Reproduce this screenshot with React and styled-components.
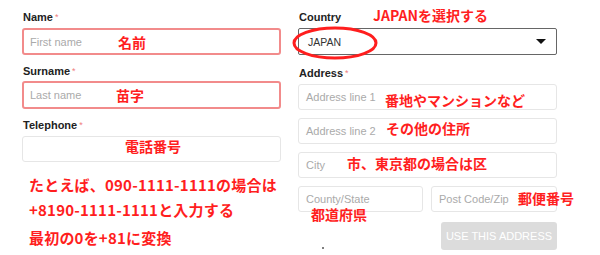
import React from "react";
import styled, { createGlobalStyle } from "styled-components";

const GlobalStyle = createGlobalStyle`
  body {
    margin: 0;
    background: #fff;
    font-family: "Liberation Sans", Arial, sans-serif;
  }
`;

const Page = styled.div`
  position: relative;
  width: 600px;
  height: 255px;
  overflow: hidden;
  display: grid;
  grid-template-columns: 259px 259px;
  column-gap: 17px;
  padding: 10px 0 0 22px;
  box-sizing: border-box;
`;

const Column = styled.div`
  display: flex;
  flex-direction: column;
`;

const Field = styled.div`
  display: flex;
  flex-direction: column;
  gap: ${(p) => p.$gap ?? 4}px;
  margin-bottom: ${(p) => p.$mb ?? 9}px;
`;

const Label = styled.label`
  font-size: 11px;
  line-height: 14px;
  font-weight: bold;
  color: #222;
  padding-left: 1px;
`;

const Star = styled.span`
  color: #f08080;
  font-weight: normal;
  font-size: 9px;
  margin-left: 2px;
  vertical-align: top;
`;

const Input = styled.div`
  height: ${(p) => p.$h || 27}px;
  box-sizing: border-box;
  border: ${(p) => (p.$error ? "2px solid #f28b8b" : "1px solid #e6e6e6")};
  border-radius: 3px;
  padding-left: ${(p) => (p.$error ? 6 : 7)}px;
  display: flex;
  align-items: center;
  font-size: 11px;
  color: #aaa;
  width: ${(p) => p.$w || "100%"};
`;

const Select = styled.div`
  height: 27px;
  box-sizing: border-box;
  border: 1px solid #666;
  border-radius: 2px;
  padding: 0 10px 0 9px;
  display: flex;
  align-items: center;
  justify-content: space-between;
  font-size: 10.5px;
  color: #333;
`;

const Arrow = styled.span`
  width: 0;
  height: 0;
  border-left: 5px solid transparent;
  border-right: 5px solid transparent;
  border-top: 5px solid #111;
`;

const Stack = styled.div`
  display: flex;
  flex-direction: column;
  gap: 8px;
`;

const Row = styled.div`
  display: flex;
  gap: 8px;
`;

const ButtonRow = styled.div`
  display: flex;
  justify-content: flex-end;
  margin-top: 10px;
`;

const Button = styled.button`
  width: 116px;
  height: 28px;
  border: none;
  border-radius: 3px;
  background: #dcdcdc;
  color: #fff;
  font-family: "Liberation Sans", Arial, sans-serif;
  font-size: 11px;
  padding: 0;
`;

const Notes = styled.div`
  display: flex;
  flex-direction: column;
  gap: 10px;
  margin-top: 6px;
  padding-left: 7px;
`;

const Note = styled.div`
  font-family: "Noto Sans CJK JP", "Noto Sans", sans-serif;
  font-weight: 700;
  font-size: 15px;
  line-height: 15px;
  letter-spacing: 0.2px;
  color: #ff1e1e;
  white-space: nowrap;
  margin-top: ${(p) => p.$extra || 0}px;
`;

const Tag = styled.span`
  position: absolute;
  left: ${(p) => p.$x}px;
  top: ${(p) => p.$y - 7}px;
  font-family: "Noto Sans CJK JP", "Noto Sans", sans-serif;
  font-weight: 700;
  font-size: 14px;
  line-height: 14px;
  color: #ff1e1e;
  white-space: nowrap;
`;

const Ring = styled.svg`
  position: absolute;
  left: 290px;
  top: 24px;
`;

const Dot = styled.span`
  position: absolute;
  left: 322px;
  top: 247px;
  width: 2px;
  height: 2px;
  border-radius: 1px;
  background: #555;
`;

const tags = [
  { t: "JAPANを選択する", x: 373, y: 15 },
  { t: "名前", x: 118, y: 42 },
  { t: "苗字", x: 116, y: 95 },
  { t: "電話番号", x: 125, y: 146 },
  { t: "番地やマンションなど", x: 385, y: 100 },
  { t: "その他の住所", x: 386, y: 128 },
  { t: "市、東京都の場合は区", x: 347, y: 163 },
  { t: "郵便番号", x: 518, y: 198 },
  { t: "都道府県", x: 311, y: 214 },
];

const App = () => {
  return (
    <>
      <GlobalStyle />
      <Page>
        <Column>
          <Field>
            <Label>Name<Star>*</Star></Label>
            <Input $error>First name</Input>
          </Field>
          <Field $gap={3}>
            <Label>Surname<Star>*</Star></Label>
            <Input $error $h={28}>Last name</Input>
          </Field>
          <Field>
            <Label>Telephone<Star>*</Star></Label>
            <Input $h={26} />
          </Field>
          <Notes>
            <Note>たとえば、090-1111-1111の場合は</Note>
            <Note>+8190-1111-1111と入力する</Note>
            <Note $extra={3}>最初の0を+81に変換</Note>
          </Notes>
        </Column>

        <Column>
          <Field $mb={11}>
            <Label>Country</Label>
            <Select>
              JAPAN
              <Arrow />
            </Select>
          </Field>
          <Field $mb={0}>
            <Label>Address<Star>*</Star></Label>
            <Stack>
              <Input $h={26}>Address line 1</Input>
              <Input $h={26}>Address line 2</Input>
              <Input $h={26}>City</Input>
              <Row>
                <Input $h={26} $w="125px">County/State</Input>
                <Input $h={26} $w="126px">Post Code/Zip</Input>
              </Row>
            </Stack>
          </Field>
          <ButtonRow>
            <Button>USE THIS ADDRESS</Button>
          </ButtonRow>
        </Column>

        <Ring width="92" height="38" viewBox="0 0 92 38">
          <ellipse cx="45" cy="19" rx="41" ry="15" fill="none" stroke="#ff1e1e" strokeWidth="3" />
        </Ring>
        {tags.map((g) => (
          <Tag key={g.t} $x={g.x} $y={g.y}>{g.t}</Tag>
        ))}
        <Dot />
      </Page>
    </>
  );
};

export default App;
